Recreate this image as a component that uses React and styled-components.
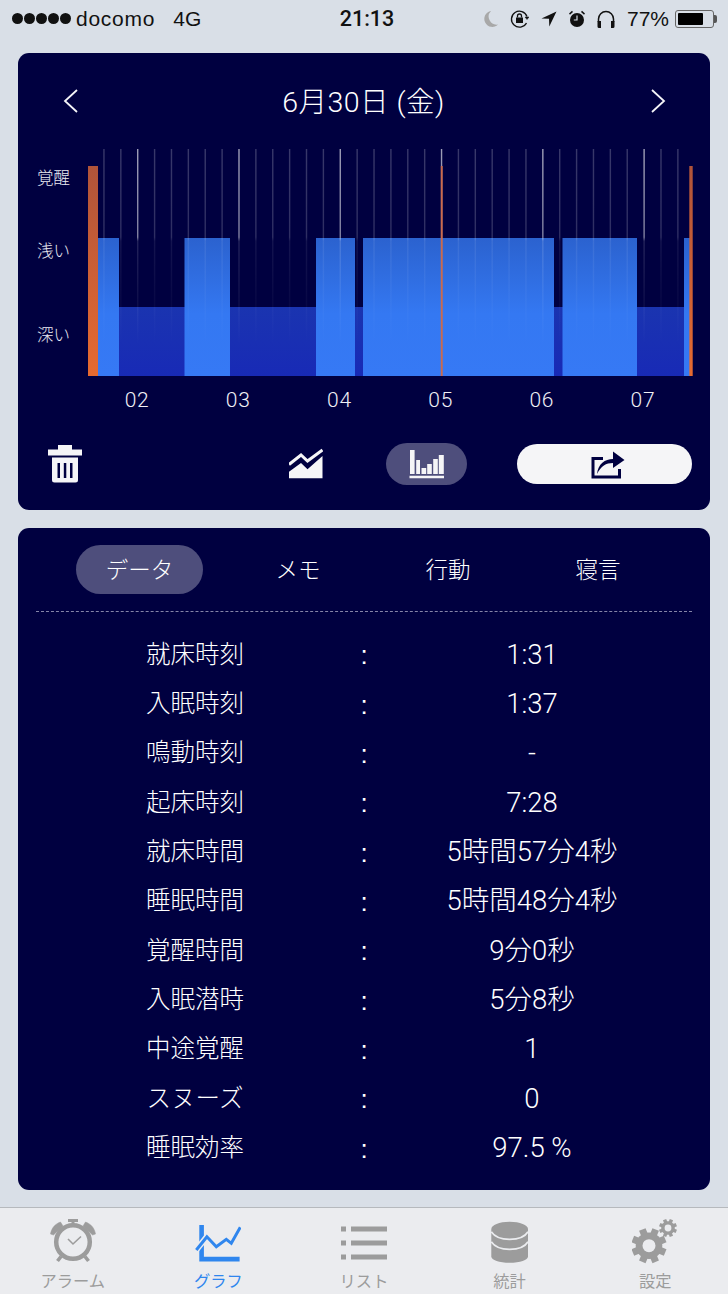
import React from "react";
import styled, { createGlobalStyle } from "styled-components";

const NAVY = "#000040";
const PILL = "#4e4e7c";
const UI_FONT = `"Liberation Sans", "Noto Sans CJK JP", sans-serif`;
const LIGHT_FONT = `Roboto, "Noto Sans CJK JP", sans-serif`;

const GlobalStyle = createGlobalStyle`
  html, body {
    margin: 0;
    padding: 0;
    background: #d9dfe7;
  }
  * {
    box-sizing: border-box;
  }
`;

const Page = styled.div`
  width: 728px;
  height: 1294px;
  overflow: hidden;
  display: flex;
  flex-direction: column;
  background: #d9dfe7;
  font-family: ${UI_FONT};
`;

const StatusBar = styled.div`
  height: 37px;
  padding: 0 10px 0 12px;
  display: grid;
  grid-template-columns: 1fr auto 1fr;
  align-items: center;
  color: #111;
  font-size: 21px;
`;

const StatusLeft = styled.div`
  display: flex;
  align-items: center;
`;

const Signal = styled.div`
  display: flex;
  gap: 1px;
  margin-right: 5px;
  span {
    width: 11px;
    height: 11px;
    border-radius: 50%;
    background: #111;
  }
`;

const Carrier = styled.span`
  margin-right: 18px;
  letter-spacing: 0.75px;
`;

const StatusTime = styled.div`
  font-family: Roboto, sans-serif;
  font-size: 21.5px;
  font-weight: 500;
  margin-left: 4px;
`;

const StatusRight = styled.div`
  display: flex;
  justify-content: flex-end;
  align-items: center;
  gap: 12px;
`;

const Battery = styled.div`
  width: 39px;
  height: 18px;
  margin-left: -6px;
  margin-right: 4px;
  padding: 2px;
  border: 1px solid #666;
  border-radius: 3px;
  position: relative;
  &::before {
    content: "";
    display: block;
    width: 77%;
    height: 100%;
    background: #000;
    border-radius: 1px;
  }
  &::after {
    content: "";
    position: absolute;
    right: -4px;
    top: 4px;
    width: 3px;
    height: 8px;
    background: #555;
    border-radius: 0 2px 2px 0;
  }
`;

const Main = styled.main`
  flex: 1;
  padding: 16px 18px 17px;
  display: flex;
  flex-direction: column;
  gap: 18px;
`;

const Card = styled.section`
  background: ${NAVY};
  border-radius: 11px;
  color: #fff;
`;

const GraphHeader = styled.header`
  height: 96px;
  padding: 0 44px 0 45px;
  display: flex;
  justify-content: space-between;
  align-items: center;
`;

const DateTitle = styled.h1`
  margin: 0 0 4px -2px;
  font-family: ${LIGHT_FONT};
  font-size: 28.5px;
  font-weight: 300;
  letter-spacing: 0.45px;
  color: #fff;
`;

const ChartRow = styled.div`
  display: flex;
  height: 227px;
`;

const YAxis = styled.div`
  width: 70px;
  padding: 20px 0 0 19px;
  display: flex;
  flex-direction: column;
`;

const YLabel = styled.span`
  height: 20px;
  margin-top: ${(p) => p.$top}px;
  font-family: ${LIGHT_FONT};
  font-size: 16.5px;
  line-height: 20px;
  font-weight: 300;
  color: #ebebf2;
  white-space: nowrap;
`;

const XAxis = styled.div`
  display: flex;
  padding-left: 68.5px;
`;

const XTick = styled.span`
  width: 101.2px;
  text-align: center;
  font-family: ${LIGHT_FONT};
  font-size: 21px;
  font-weight: 300;
  line-height: 48px;
  color: #f0f0f6;
  letter-spacing: 0.8px;
`;

const Toolbar = styled.div`
  height: 42px;
  margin-top: 19px;
  margin-bottom: 25px;
  padding-left: 30px;
  display: flex;
  align-items: center;
`;

const ToolIcon = styled.div`
  width: 34px;
  height: 42px;
  margin-left: ${(p) => p.$left || 0}px;
  display: flex;
`;

const ViewPill = styled.div`
  width: 81px;
  height: 42px;
  margin-left: 63px;
  border-radius: 21px;
  background: ${PILL};
  display: flex;
  align-items: center;
  justify-content: center;
`;

const ShareButton = styled.div`
  width: 175px;
  height: 40px;
  margin-left: 50px;
  padding-left: 7px;
  border-radius: 20px;
  background: #f5f5f7;
  display: flex;
  align-items: center;
  justify-content: center;
`;

const Tabs = styled.div`
  padding: 17px 0 0 58px;
  display: flex;
`;

const Tab = styled.div`
  width: ${(p) => (p.$active ? 127 : 150)}px;
  height: 49px;
  margin-right: ${(p) => (p.$active ? 20 : 0)}px;
  padding-bottom: 4px;
  border-radius: 24.5px;
  background: ${(p) => (p.$active ? PILL : "transparent")};
  display: flex;
  align-items: center;
  justify-content: center;
  font-family: ${LIGHT_FONT};
  font-size: 22.5px;
  font-weight: 300;
  color: #fff;
`;

const Divider = styled.div`
  margin: 17px 18px 18px;
  border-top: 1px dashed #8585a8;
`;

const Rows = styled.div`
  padding: 0 38px 17px 36px;
`;

const Row = styled.div`
  height: 49.35px;
  display: grid;
  grid-template-columns: 282px 56px 280px;
  align-items: center;
  text-align: center;
  white-space: nowrap;
`;

const RowLabel = styled.span`
  font-family: ${LIGHT_FONT};
  font-size: 24.5px;
  font-weight: 300;
  line-height: 36px;
  color: #fff;
`;

const RowColon = styled.span`
  padding-top: 2px;
  font-size: 26px;
`;

const RowValue = styled.span`
  font-family: ${LIGHT_FONT};
  font-size: 27.5px;
  font-weight: 300;
  line-height: 36px;
  color: #fff;
`;

const TabBar = styled.nav`
  height: 87px;
  border-top: 1px solid #b6b9bd;
  background: #ebecef;
  display: grid;
  grid-template-columns: repeat(5, 1fr);
`;

const NavItem = styled.div`
  display: flex;
  flex-direction: column;
  align-items: center;
  padding-top: 11px;
  color: ${(p) => (p.$active ? "#2f86ee" : "#9c9c9c")};
`;

const NavLabel = styled.span`
  margin-top: 7px;
  font-family: ${LIGHT_FONT};
  font-size: 16.3px;
  font-weight: 400;
  line-height: 20px;
`;

const ROWS = [
  ["就床時刻", "1:31"],
  ["入眠時刻", "1:37"],
  ["鳴動時刻", "-"],
  ["起床時刻", "7:28"],
  ["就床時間", "5時間57分4秒"],
  ["睡眠時間", "5時間48分4秒"],
  ["覚醒時間", "9分0秒"],
  ["入眠潜時", "5分8秒"],
  ["中途覚醒", "1"],
  ["スヌーズ", "0"],
  ["睡眠効率", "97.5 %"],
];

const LIGHT_SLEEP = [
  [98, 119],
  [184.5, 230],
  [316, 355],
  [363, 554],
  [562.5, 637],
  [684, 690],
];

const HOURS = ["02", "03", "04", "05", "06", "07"];

// grid lines every ~17px, every sixth one is an hour mark
const GRID_LINES = Array.from({ length: 35 }, (_, i) => ({
  x: 103.95 + i * 16.88,
  hour: i % 6 === 2,
}));

const Chevron = ({ right }) => (
  <svg width="16" height="26" viewBox="0 0 16 26">
    <path
      d={right ? "M2 2l12 11L2 24" : "M14 2L2 13l12 11"}
      fill="none"
      stroke="#f4f4f8"
      strokeWidth="1.8"
    />
  </svg>
);

const SleepChart = () => (
  <svg width="605" height="227" viewBox="88 149 605 227">
    <defs>
      <linearGradient id="lightBar" x1="0" y1="238" x2="0" y2="376" gradientUnits="userSpaceOnUse">
        <stop offset="0" stopColor="#2b62cf" />
        <stop offset="0.55" stopColor="#3478f2" />
        <stop offset="1" stopColor="#3679f5" />
      </linearGradient>
      <linearGradient id="deepBar" x1="0" y1="307" x2="0" y2="376" gradientUnits="userSpaceOnUse">
        <stop offset="0" stopColor="#1a34b0" />
        <stop offset="1" stopColor="#182ab6" />
      </linearGradient>
      <linearGradient id="wakeBar" x1="0" y1="166" x2="0" y2="376" gradientUnits="userSpaceOnUse">
        <stop offset="0" stopColor="#b0543a" />
        <stop offset="1" stopColor="#e66a30" />
      </linearGradient>
      <linearGradient id="gridFaint" x1="0" y1="149" x2="0" y2="345" gradientUnits="userSpaceOnUse">
        <stop offset="0" stopColor="#fff" stopOpacity="0.22" />
        <stop offset="0.45" stopColor="#fff" stopOpacity="0.18" />
        <stop offset="0.47" stopColor="#fff" stopOpacity="0.08" />
        <stop offset="1" stopColor="#fff" stopOpacity="0" />
      </linearGradient>
      <linearGradient id="gridHour" x1="0" y1="149" x2="0" y2="345" gradientUnits="userSpaceOnUse">
        <stop offset="0" stopColor="#fff" stopOpacity="0.62" />
        <stop offset="0.45" stopColor="#fff" stopOpacity="0.5" />
        <stop offset="0.47" stopColor="#fff" stopOpacity="0.14" />
        <stop offset="1" stopColor="#fff" stopOpacity="0" />
      </linearGradient>
    </defs>
    <rect x="119" y="307" width="571" height="69" fill="url(#deepBar)" />
    {LIGHT_SLEEP.map(([from, to]) => (
      <rect key={from} x={from} y="238" width={to - from} height="138" fill="url(#lightBar)" />
    ))}
    {GRID_LINES.map((l) => (
      <rect
        key={l.x}
        x={l.x - 0.7}
        y="149"
        width="1.4"
        height="196"
        fill={l.hour ? "url(#gridHour)" : "url(#gridFaint)"}
      />
    ))}
    <rect x="88" y="166" width="10" height="210" fill="url(#wakeBar)" />
    <rect x="440.8" y="166" width="1.9" height="210" fill="#cc6a4c" />
    <rect x="689.3" y="166" width="3.4" height="210" fill="url(#wakeBar)" />
  </svg>
);

const TrashIcon = () => (
  <svg width="34" height="42" viewBox="0 0 34 42">
    <path d="M10 2h14v5H10zM0 6.500h34v6H0z" fill="#f5f5f7" />
    <path
      fillRule="evenodd"
      d="M4 14.500h26V37a2.500 2.500 0 0 1-2.500 2.500h-21A2.500 2.500 0 0 1 4 37zM9.500 20v15H12V20zM15.800 20v15h2.500V20zM22 20v15h2.500V20z"
      fill="#f5f5f7"
    />
  </svg>
);

const LineChartIcon = () => (
  <svg width="34" height="42" viewBox="0 0 34 42">
    <path d="M0 21.500L12 12l6.500 6L33.500 7" fill="none" stroke="#f5f5f7" strokeWidth="3" />
    <path d="M0 28.700L12 20l6.500 6.300L33.500 13v22.300H0z" fill="#f5f5f7" />
  </svg>
);

const BarsIcon = () => (
  <svg width="35" height="30" viewBox="0 0 35 30">
    <path
      d="M1 1h4.600v24H1zM7.200 11H11v14H7.200zM12.500 19h4.700v6h-4.700zM18.200 15h4.600v10h-4.600zM24.200 10h4.600v15h-4.600zM29.800 6h5v19h-5zM.5 26.700H35v2.600H.5z"
      fill="#f5f5f7"
    />
  </svg>
);

const ShareIcon = () => (
  <svg width="34" height="29" viewBox="0 0 34 29">
    <path d="M12 8.500H2v18.500h26.500v-8" fill="none" stroke={NAVY} strokeWidth="3" />
    <path d="M6 24C7 14 14 9 22 9V1.500L33.500 10 22 18v-5c-7 0-12 3-16 11z" fill={NAVY} />
  </svg>
);

const AlarmNavIcon = () => (
  <svg width="48" height="46" viewBox="0 0 48 46" fill="none" stroke="currentColor">
    <circle cx="24" cy="23" r="16.800" strokeWidth="4.500" />
    <path d="M19 1.500h10M24 1.500v4" strokeWidth="3" />
    <path d="M1.500 15C2.500 9 6 5 11.500 3L14 7l-9.500 9zM46.500 15C45.500 9 42 5 36.500 3L34 7l9.500 9z" fill="currentColor" strokeWidth="0.500" />
    <path d="M12 37.500l-3.500 4.500M36 37.500l3.500 4.500" strokeWidth="3.600" />
    <path d="M19 20l5 5 8-7.500" strokeWidth="1.600" />
  </svg>
);

const GraphNavIcon = () => (
  <svg width="46" height="46" viewBox="0 0 46 46">
    <path d="M4.300 6h4.600v31.700h35.700v4.800H4.300z" fill="currentColor" />
    <path d="M1.300 31l10.600-13.300 9.400 10 10-7.400 5 4 9-16" fill="none" stroke="#ebecef" strokeWidth="6" />
    <path d="M1.300 31l10.600-13.300 9.400 10 10-7.400 5 4 9-16" fill="none" stroke="currentColor" strokeWidth="3" />
  </svg>
);

const ListNavIcon = () => (
  <svg width="46" height="46" viewBox="0 0 46 46" fill="currentColor">
    <path d="M0 7.500h5v5H0zM10 7.500h36v5H10zM0 21.500h5v5H0zM10 21.500h36v5H10zM0 35.500h5v5H0zM10 35.500h36v5H10z" />
  </svg>
);

const DatabaseNavIcon = () => (
  <svg width="38" height="46" viewBox="0 0 38 46" fill="none">
    <path
      d="M.3 10c0-4 8-7.300 18.300-7.300S37 6 37 10v27.500c0 3.500-8 6.300-18.400 6.300S.3 41 .3 37.500z"
      fill="currentColor"
    />
    <path d="M.3 12.700c3 5 10 7.600 18.300 7.600S34 17.700 37 12.700" stroke="#ebecef" strokeWidth="1.700" />
    <path d="M.3 22.700c3 5 10 7.600 18.300 7.600S34 27.700 37 22.700" stroke="#ebecef" strokeWidth="1.700" />
  </svg>
);

const Gear = ({ cx, cy, r, hole, teeth, toothW }) => (
  <g>
    {Array.from({ length: teeth }, (_, i) => (
      <rect
        key={i}
        x={cx - toothW / 2}
        y={cy - r}
        width={toothW}
        height={r}
        transform={`rotate(${(360 / teeth) * i + 22.5} ${cx} ${cy})`}
        fill="currentColor"
      />
    ))}
    <circle cx={cx} cy={cy} r={r * 0.76} fill="currentColor" />
    <circle cx={cx} cy={cy} r={hole} fill="#ebecef" />
  </g>
);

const SettingsNavIcon = () => (
  <svg width="46" height="46" viewBox="0 0 46 46">
    <Gear cx="17" cy="26.700" r="17.500" hole="6.500" teeth={8} toothW={7} />
    <Gear cx="36" cy="9" r="9" hole="3.400" teeth={8} toothW={3.500} />
  </svg>
);

const MoonIcon = () => (
  <svg width="14" height="16" viewBox="0 0 14 16">
    <path d="M7 0a8 8 0 0 0 7 13.500A8 8 0 1 1 7 0z" fill="#a8a8a8" />
  </svg>
);

const RotationLockIcon = () => (
  <svg width="19" height="20" viewBox="0 0 19 20" fill="none" stroke="#111">
    <path d="M17 7.500A8 8 0 1 0 16.500 14" strokeWidth="1.300" />
    <path d="M15 8h4l-2 2.500z" fill="#111" strokeWidth="0.500" />
    <rect x="6" y="8.500" width="7" height="5.500" fill="#111" stroke="none" />
    <path d="M7.500 8.500V7a2 2 0 0 1 4 0v1.500" strokeWidth="1.300" />
  </svg>
);

const LocationIcon = () => (
  <svg width="16" height="16" viewBox="0 0 16 16">
    <path d="M15.500.5L.5 7.500l7.500.3.300 7.700z" fill="#111" />
  </svg>
);

const AlarmStatusIcon = () => (
  <svg width="16" height="18" viewBox="0 0 16 18">
    <circle cx="8" cy="10" r="7" fill="#111" />
    <path d="M0 3.500L3 .8l1 1.200-3 2.700zM16 3.500L13 .8l-1 1.200 3 2.700z" fill="#111" />
    <path d="M8 5.500V10H4.800" fill="none" stroke="#d9dfe7" strokeWidth="1.200" />
  </svg>
);

const HeadphonesIcon = () => (
  <svg width="18" height="18" viewBox="0 0 18 18">
    <path d="M1.500 12V9a7.500 7.500 0 0 1 15 0v3" fill="none" stroke="#111" strokeWidth="1.500" />
    <path d="M.5 11h3.500v7H2a1.500 1.500 0 0 1-1.500-1.500zM17.500 11H14v7h2a1.500 1.500 0 0 0 1.500-1.500z" fill="#111" />
  </svg>
);

const NAV_ITEMS = [
  { label: "アラーム", icon: <AlarmNavIcon /> },
  { label: "グラフ", icon: <GraphNavIcon />, active: true },
  { label: "リスト", icon: <ListNavIcon /> },
  { label: "統計", icon: <DatabaseNavIcon /> },
  { label: "設定", icon: <SettingsNavIcon /> },
];

const App = () => (
  <Page>
    <GlobalStyle />
    <StatusBar>
      <StatusLeft>
        <Signal>
          <span />
          <span />
          <span />
          <span />
          <span />
        </Signal>
        <Carrier>docomo</Carrier>
        <span>4G</span>
      </StatusLeft>
      <StatusTime>21:13</StatusTime>
      <StatusRight>
        <MoonIcon />
        <RotationLockIcon />
        <LocationIcon />
        <AlarmStatusIcon />
        <HeadphonesIcon />
        <span>77%</span>
        <Battery />
      </StatusRight>
    </StatusBar>

    <Main>
      <Card>
        <GraphHeader>
          <Chevron />
          <DateTitle>6月30日 (金)</DateTitle>
          <Chevron right />
        </GraphHeader>
        <ChartRow>
          <YAxis>
            <YLabel $top={0}>覚醒</YLabel>
            <YLabel $top={53}>浅い</YLabel>
            <YLabel $top={64}>深い</YLabel>
          </YAxis>
          <SleepChart />
        </ChartRow>
        <XAxis>
          {HOURS.map((h) => (
            <XTick key={h}>{h}</XTick>
          ))}
        </XAxis>
        <Toolbar>
          <ToolIcon>
            <TrashIcon />
          </ToolIcon>
          <ToolIcon $left={207}>
            <LineChartIcon />
          </ToolIcon>
          <ViewPill>
            <BarsIcon />
          </ViewPill>
          <ShareButton>
            <ShareIcon />
          </ShareButton>
        </Toolbar>
      </Card>

      <Card>
        <Tabs>
          <Tab $active>データ</Tab>
          <Tab>メモ</Tab>
          <Tab>行動</Tab>
          <Tab>寝言</Tab>
        </Tabs>
        <Divider />
        <Rows>
          {ROWS.map(([label, value]) => (
            <Row key={label}>
              <RowLabel>{label}</RowLabel>
              <RowColon>:</RowColon>
              <RowValue>{value}</RowValue>
            </Row>
          ))}
        </Rows>
      </Card>
    </Main>

    <TabBar>
      {NAV_ITEMS.map((item) => (
        <NavItem key={item.label} $active={item.active}>
          {item.icon}
          <NavLabel>{item.label}</NavLabel>
        </NavItem>
      ))}
    </TabBar>
  </Page>
);

export default App;
